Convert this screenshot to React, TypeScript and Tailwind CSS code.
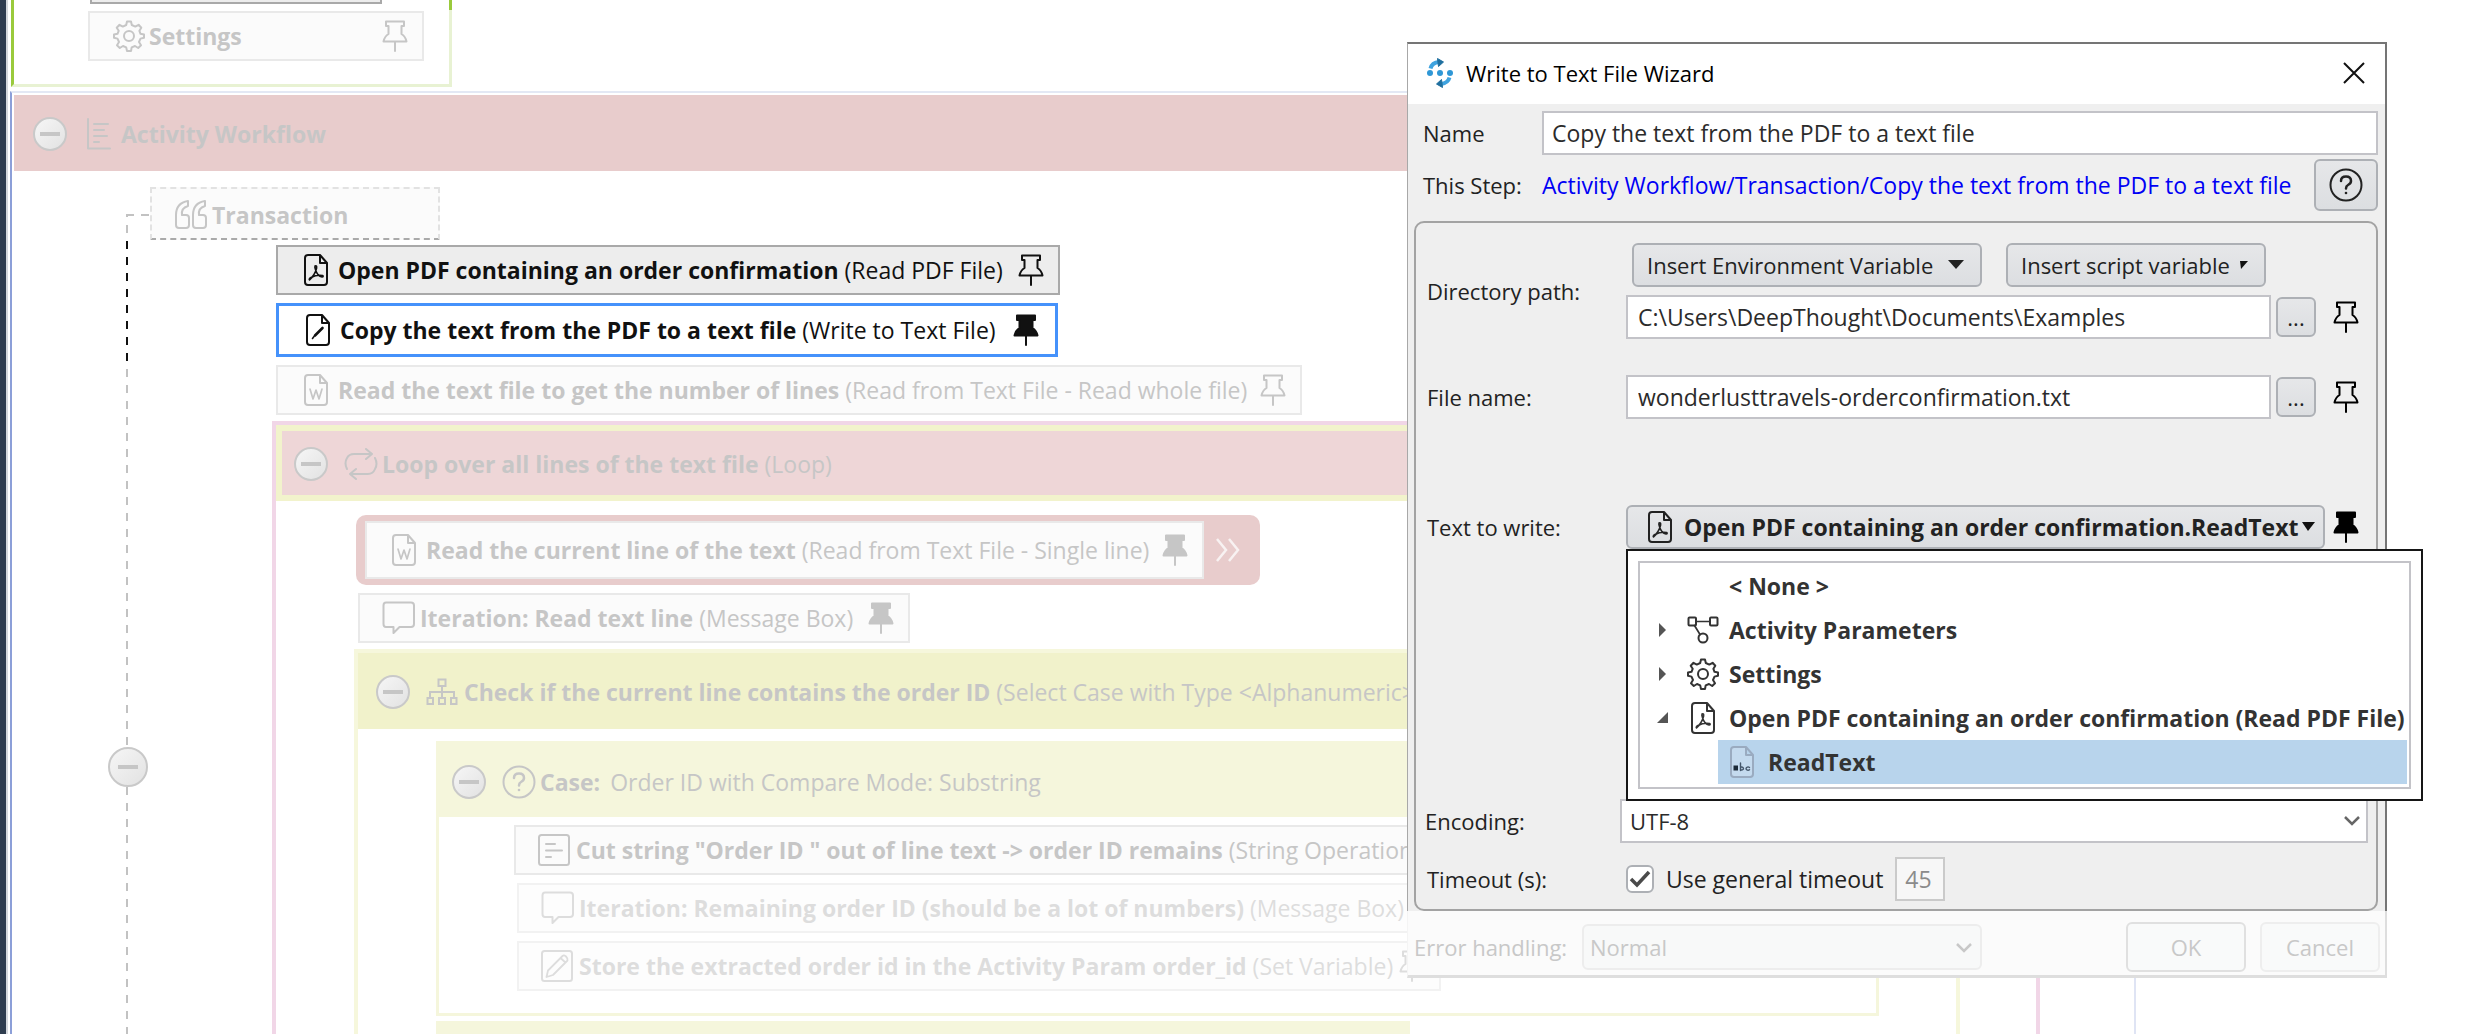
import React, { ReactNode } from "react";

/* ---------- icons ---------- */

type IconProps = { className?: string };

function Svg({ w, h, children, className = "" }: { w: number; h: number; children: ReactNode; className?: string }) {
  return (
    <svg
      width={w}
      height={h}
      viewBox={`0 0 ${w} ${h}`}
      fill="none"
      stroke="currentColor"
      strokeWidth={2}
      strokeLinejoin="round"
      strokeLinecap="round"
      aria-hidden="true"
      className={`shrink-0 ${className}`}
    >
      {children}
    </svg>
  );
}

const PAGE = "M4 1H16L23 9V28Q23 31 20 31H4Q1 31 1 28V4Q1 1 4 1Z M16 1V9H23";

function PdfFile() {
  return (
    <Svg w={24} h={32}>
      <path d={PAGE} />
      <path strokeWidth={1.6} d="M11 12Q13 11 12.6 14Q11.500 20 5.500 26Q4.500 25 7 23.500Q13 20.500 18.500 21.500Q20 22.500 18 23Q13.500 22 11.600 16Q10.500 13 11 12" />
    </Svg>
  );
}

function PenFile() {
  return (
    <Svg w={24} h={32}>
      <path d={PAGE} />
      <path strokeWidth={2.6} d="M9 21.500L16.500 14" />
      <path strokeWidth={1.6} d="M6.500 24.500L8 22.500" />
    </Svg>
  );
}

function WordFile() {
  return (
    <Svg w={24} h={32}>
      <path d={PAGE} />
      <path strokeWidth={1.7} d="M6 15L9 25L12 16L15 25L18 15" />
    </Svg>
  );
}

function TextFile() {
  return (
    <Svg w={24} h={32} className="text-[#9aabc0]">
      <path fill="#c4daee" d={PAGE} />
      <rect x="3.500" y="19.500" width="4.500" height="5" fill="#1c2a38" stroke="none" />
      <path stroke="#44566a" strokeWidth={1.400} d="M10.500 17V24.500M10.500 21.500a1.700 1.500 0 1 1 0 2M19.500 21.500a2 1.600 0 1 0 0 2.200" />
    </Svg>
  );
}

function Pin({ filled = false, className = "" }: { filled?: boolean; className?: string }) {
  return (
    <Svg w={26} h={32} className={className}>
      <path
        fill={filled ? "currentColor" : "none"}
        d="M4 1.500H22V6H19.500V14Q23.500 16.500 24.500 21.500H1.500Q2.500 16.500 6.500 14V6H4Z"
      />
      <path d="M13 22V31" />
    </Svg>
  );
}

function Gear({ className = "" }: IconProps) {
  return (
    <Svg w={32} h={32} className={className}>
      <circle cx="16" cy="16" r="5" />
      <path d="M13.200 5L14 1.500H18L18.800 5L22.300 6.600L25.600 4.800L28.300 7.700L26.400 10.800L27.500 13.800L31 14.500V17.800L27.500 18.600L26 22L28 25.200L25.200 28L22 26L18.700 27.400L18 31H14L13.200 27.400L10 26L6.800 28L4 25.200L6 22L4.500 18.600L1 17.800V14.500L4.500 13.800L5.700 10.800L3.700 7.700L6.500 4.800L9.800 6.600Z" />
    </Svg>
  );
}

function WorkflowLines() {
  return (
    <Svg w={24} h={32}>
      <path d="M1 1V30.500H23M7 6H21M7 12H17M7 18H20M7 24H12" />
    </Svg>
  );
}

function Quotes() {
  return (
    <Svg w={34} h={30}>
      <path d="M14 1Q2 3 2 15V25Q2 28 5 28H12Q15 28 15 25V18Q15 15 12 15H8Q7 8 14 6ZM31 1Q19 3 19 15V25Q19 28 22 28H29Q32 28 32 25V18Q32 15 29 15H25Q24 8 31 6Z" />
    </Svg>
  );
}

function LoopArrows() {
  return (
    <Svg w={34} h={32}>
      <path d="M3 21Q0 15 3 10Q5 6 10 6H28M22 1L28 6L22 11M31 10Q34 16 31 21Q29 26 24 26H6M12 21L6 26L12 31" />
    </Svg>
  );
}

function Speech() {
  return (
    <Svg w={34} h={34}>
      <path d="M4 1.500H29Q32 1.500 32 4.500V23Q32 26 29 26H17.500L11.500 32V26H4Q1.500 26 1.500 23V4.500Q1.500 1.500 4 1.500Z" />
    </Svg>
  );
}

function Sitemap() {
  return (
    <Svg w={32} h={28}>
      <path strokeLinejoin="miter" d="M12.500 1.500H19.500V8H12.500ZM1.500 20H7V26H1.500ZM13 20H19V26H13ZM25 20H30.500V26H25ZM16 8V20M4 20V14H28V20" />
    </Svg>
  );
}

function Question() {
  return (
    <Svg w={34} h={34}>
      <circle cx="17" cy="17" r="15.500" />
      <path strokeWidth={2.500} d="M12 13Q12 8.500 17 8.500T22 13Q22 15.500 19 17Q17 18 17 20.500" />
      <circle cx="17" cy="25" r="1.300" fill="currentColor" stroke="none" />
    </Svg>
  );
}

function ListBox() {
  return (
    <Svg w={32} h={32}>
      <rect x="1" y="1" width="30" height="30" rx="2.500" />
      <path d="M8 10H17M8 16.500H24M8 23H13" />
    </Svg>
  );
}

function EditBox() {
  return (
    <Svg w={32} h={32}>
      <rect x="1" y="1" width="30" height="30" rx="2.500" />
      <path strokeWidth={1.800} d="M5.500 27L7 20.500L21.500 6Q23 4.500 25 6.500T26.500 10.500L12 25ZM19.500 8L24.500 12.500" />
    </Svg>
  );
}

function Nodes() {
  return (
    <Svg w={32} h={28}>
      <rect x="1.500" y="1.500" width="7.500" height="8" rx="1" />
      <rect x="23" y="1.500" width="7.500" height="8" rx="1" />
      <circle cx="16" cy="22" r="4.500" />
      <path strokeWidth={1.700} d="M9 5.500H23M7.500 9.500L13 18.500" />
    </Svg>
  );
}

function Logo() {
  return (
    <svg width="28" height="30" viewBox="0 0 28 30" fill="none" aria-hidden="true" className="shrink-0">
      <path d="M4.500 10.500Q6 4.500 13 4M23.500 19.500Q22 25 15 26" stroke="#3fa3df" strokeWidth="4" />
      <path d="M11.500 .5L17.500 4L12.500 8.500ZM16.500 29.500L10.500 26L15.500 21.500Z" fill="#1f6f9f" stroke="#1f6f9f" />
      <circle cx="4" cy="15" r="3" fill="#2f97d6" />
      <circle cx="14" cy="15" r="3" fill="#2f97d6" />
      <circle cx="24" cy="15" r="3" fill="#2f97d6" />
    </svg>
  );
}

function Triangle({ className = "" }: IconProps) {
  return (
    <svg width="16" height="10" viewBox="0 0 16 10" fill="currentColor" aria-hidden="true" className={`shrink-0 ${className}`}>
      <path d="M0 0H16L8 9Z" />
    </svg>
  );
}

function Chevron({ className = "" }: IconProps) {
  return (
    <svg width="16" height="12" viewBox="0 0 16 12" fill="none" stroke="currentColor" strokeWidth="2.500" aria-hidden="true" className={className}>
      <path d="M1 2L8 9L15 2" />
    </svg>
  );
}

/* ---------- workflow canvas ---------- */

function Collapse({ label, large = false }: { label: string; large?: boolean }) {
  return (
    <button
      type="button"
      aria-label={`Collapse ${label}`}
      className={`flex shrink-0 items-center justify-center rounded-full border-2 border-[#c9c9c9] bg-linear-to-br from-[#f6f6f6] to-[#e2e2e2] ${large ? "size-10" : "size-[34px]"}`}
    >
      <span className="h-1 w-5 bg-[#c6c6c6]" />
    </button>
  );
}

type StepProps = {
  icon: ReactNode;
  title: string;
  kind?: string;
  pin?: "open" | "filled";
  className: string;
};

function Step({ icon, title, kind, pin, className }: StepProps) {
  return (
    <div className={`flex items-center whitespace-nowrap ${className}`}>
      {icon}
      <span>
        <b>{title}</b>
        {kind && <span> ({kind})</span>}
      </span>
      {pin && <Pin filled={pin === "filled"} className="ml-auto" />}
    </div>
  );
}

const FADED = "border-2 border-[#e9e9e9] bg-[#fbfbfb] text-[#c6c6c6]";
const FAINT = "border-2 border-[#f2f2f2] bg-[#fdfdfd] text-[#dddddd]";

function Rail() {
  return (
    <div className="ml-24 flex w-10 shrink-0 flex-col items-center pt-[43px]">
      <div className="ml-[18px] h-[2px] w-6 self-start bg-[repeating-linear-gradient(to_right,#c2c2c2_0_8px,transparent_8px_15px)]" />
      <div className="mr-[2px] h-[25px] w-[2px] bg-[repeating-linear-gradient(to_bottom,#c2c2c2_0_1px,transparent_1px_9px,#c2c2c2_9px_17px,transparent_17px_25px)]" />
      <div className="mr-[2px] h-[120px] w-[2px] bg-[repeating-linear-gradient(to_bottom,#111111_0_8px,transparent_8px_16px)]" />
      <div className="mr-[2px] h-[386px] w-[2px] bg-[repeating-linear-gradient(to_bottom,transparent_0_8px,#c2c2c2_8px_16px)]" />
      <Collapse label="Transaction" large />
      <div className="mr-[2px] w-[2px] flex-1 bg-[repeating-linear-gradient(to_bottom,#c2c2c2_0_8px,transparent_8px_16px)]" />
    </div>
  );
}

function CaseBox() {
  return (
    <section className="mt-3 mr-[77px] ml-[78px] border-x-[3px] border-b-[3px] border-[#f5f6dc] pb-[22px]">
      <header className="flex h-[76px] items-center bg-[#f5f6dc] pt-[6px] pl-[13px] whitespace-nowrap text-[#c6c6c6]">
        <Collapse label="Case" />
        <span className="ml-4 flex items-center gap-1">
          <Question />
          <span>
            <b className="mr-[10px]">Case:</b>Order ID with Compare Mode: Substring
          </span>
        </span>
      </header>
      <div className="flex flex-col gap-2 pt-2">
        <Step
          icon={<ListBox />}
          title={'Cut string "Order ID " out of line text -> order ID remains'}
          kind="String Operation"
          pin="open"
          className={`ml-[75px] h-[50px] w-[980px] gap-[6px] pr-4 pl-[22px] ${FADED}`}
        />
        <Step
          icon={<Speech />}
          title="Iteration: Remaining order ID (should be a lot of numbers)"
          kind="Message Box"
          pin="open"
          className={`ml-[78px] h-[50px] w-[940px] gap-1 pr-4 pl-[22px] ${FAINT}`}
        />
        <Step
          icon={<EditBox />}
          title="Store the extracted order id in the Activity Param order_id"
          kind="Set Variable"
          pin="open"
          className={`ml-[78px] h-[50px] w-[924px] gap-[6px] pr-4 pl-[22px] ${FAINT}`}
        />
      </div>
    </section>
  );
}

function SelectCase() {
  return (
    <section className="mt-[6px] mr-[76px] ml-[78px] flex-1 border-x-4 border-t-4 border-[#f6f7dc]">
      <header className="flex h-[76px] items-center bg-[#f1f2cb] pt-[2px] pl-[18px] whitespace-nowrap text-[#c6c6c6]">
        <Collapse label="Check" />
        <span className="ml-4 flex items-center gap-[6px]">
          <Sitemap />
          <span>
            <b>Check if the current line contains the order ID</b> (Select Case with Type &lt;Alphanumeric&gt;)
          </span>
        </span>
      </header>
      <CaseBox />
      <div className="mt-[5px] ml-[78px] h-[76px] w-[974px] bg-[#f5f6dc]" />
    </section>
  );
}

function LoopBox() {
  return (
    <section className="mt-[6px] mr-[94px] ml-[-4px] flex flex-col border-x-4 border-t-4 border-[#f1d6e7]">
      <header className="flex h-[76px] items-center border-[6px] border-[#f2f3cc] bg-[#eed6d7] pt-[2px] pl-3 whitespace-nowrap text-[#c6c6c6]">
        <Collapse label="Loop" />
        <span className="ml-4 flex items-center gap-1">
          <LoopArrows />
          <span>
            <b>Loop over all lines of the text file</b> (Loop)
          </span>
        </span>
      </header>
      <div className="mt-[14px] ml-20 flex h-[70px] w-[904px] items-center rounded-[10px] bg-[#e8cccc] pl-[9px]">
        <Step
          icon={<WordFile />}
          title="Read the current line of the text"
          kind="Read from Text File - Single line"
          pin="filled"
          className="h-[58px] w-[839px] gap-[10px] border-2 border-[#e9e9e9] bg-[#fbfbfb] pr-[14px] pl-[25px] text-[#c6c6c6]"
        />
        <svg width="26" height="24" viewBox="0 0 26 24" fill="none" stroke="#f8f2f2" strokeWidth="2.500" className="ml-[11px]" aria-hidden="true">
          <path d="M2 1L11 12L2 23M14 1L23 12L14 23" />
        </svg>
      </div>
      <Step
        icon={<Speech />}
        title="Iteration: Read text line"
        kind="Message Box"
        pin="filled"
        className={`mt-2 ml-[82px] h-[50px] w-[552px] gap-1 pr-[14px] pl-[22px] ${FADED}`}
      />
      <SelectCase />
    </section>
  );
}

function Workflow() {
  return (
    <section className="mt-1 mr-[332px] ml-[2px] border-2 border-b-0 border-t-[#e3e8f4] border-r-[#dfe4f4] border-l-[#8c9fd8]">
      <header className="mt-[2px] ml-[2px] flex h-[76px] items-center bg-[#e8cccc] pt-[2px] pl-[19px] text-[#c6c6c6]">
        <Collapse label="Activity Workflow" />
        <span className="ml-5 flex items-center gap-[10px]">
          <WorkflowLines />
          <b>Activity Workflow</b>
        </span>
      </header>
      <div className="flex">
        <Rail />
        <div className="min-w-0 flex-1 pt-4">
          <div className="flex">
            <Step
              icon={<Quotes />}
              title="Transaction"
              className="ml-[2px] h-[53px] w-[290px] gap-1 border-2 border-dashed border-[#e2e2e2] border-b-[#aaaaaa] bg-[#fbfbfb] pt-[3px] pl-[22px] text-[#c6c6c6]"
            />
          </div>
          <div className="ml-32 pt-[5px]">
            <Step
              icon={<PdfFile />}
              title="Open PDF containing an order confirmation"
              kind="Read PDF File"
              pin="open"
              className="h-[50px] w-[784px] gap-[10px] border-2 border-[#a9a9a9] bg-[#ededed] pr-[14px] pl-[26px] text-[#111111]"
            />
            <Step
              icon={<PenFile />}
              title="Copy the text from the PDF to a text file"
              kind="Write to Text File"
              pin="filled"
              className="mt-2 h-[54px] w-[782px] gap-[10px] border-[3px] border-[#4592fb] bg-white pr-4 pl-[27px] text-[#111111]"
            />
            <Step
              icon={<WordFile />}
              title="Read the text file to get the number of lines"
              kind="Read from Text File - Read whole file"
              pin="open"
              className={`mt-2 h-[50px] w-[1026px] gap-[10px] pr-[14px] pl-[26px] ${FADED}`}
            />
            <LoopBox />
          </div>
        </div>
      </div>
    </section>
  );
}

function Canvas() {
  return (
    <main className="min-w-0 flex-1 text-[23px]">
      <div className="ml-[3px] h-[10px] w-[441px] border-x-[3px] border-[#9aca3c] pl-[76px]">
        <div className="h-1 w-[292px] border-2 border-t-0 border-[#a9a9a9] bg-[#ededed]" />
      </div>
      <div className="ml-[3px] h-[77px] w-[441px] border-x-[3px] border-b-[3px] border-r-[#e8f2d3] border-b-[#e8f2d3] border-l-[#9aca3c] pt-px pl-[74px]">
        <Step icon={<Gear />} title="Settings" pin="open" className={`h-[50px] w-[336px] gap-1 pr-[14px] pl-[23px] ${FADED}`} />
      </div>
      <Workflow />
    </main>
  );
}

/* ---------- wizard dialog ---------- */

const BUTTON = "flex items-center rounded-md border-2 border-[#adb0b5] bg-linear-to-b from-[#e6e7e9] to-[#dcdee1]";
const FIELD = "h-11 min-w-0 border-2 border-[#c3c3c8] bg-white text-[#2b2b2b] outline-none";

function PathField({ id, value }: { id: string; value: string }) {
  return (
    <div className="flex items-center">
      <input id={id} defaultValue={value} className={`${FIELD} flex-1 px-[10px] text-[23px]`} />
      <button type="button" aria-label="Browse" className={`${BUTTON} ml-[5px] h-10 w-10 justify-center`}>
        ...
      </button>
      <button type="button" aria-label="Pin" className="ml-[17px] text-black">
        <Pin />
      </button>
    </div>
  );
}

function TreeRow({ arrow, icon, label }: { arrow?: "right" | "down"; icon?: ReactNode; label: string }) {
  return (
    <li>
      <button type="button" className="flex h-11 w-full items-center pl-[15px] font-bold">
        <svg width="12" height="14" viewBox="0 0 12 14" fill="#555555" aria-hidden="true" className="shrink-0">
          {arrow === "right" && <path d="M2 0L9 7L2 14Z" />}
          {arrow === "down" && <path d="M11 1V12H0Z" />}
        </svg>
        <span className="ml-[18px] flex w-8 shrink-0 justify-center">{icon}</span>
        <span className="ml-[10px] whitespace-nowrap">{label}</span>
      </button>
    </li>
  );
}

function VariableTree() {
  return (
    <div className="absolute top-full left-0 z-20 w-[797px] border-2 border-[#161616] bg-white p-[10px] text-[#333333]">
      <ul className="border-2 border-[#c3c3c8] px-[2px] pt-px pb-[3px]">
        <TreeRow label="< None >" />
        <TreeRow arrow="right" icon={<Nodes />} label="Activity Parameters" />
        <TreeRow arrow="right" icon={<Gear />} label="Settings" />
        <TreeRow arrow="down" icon={<PdfFile />} label="Open PDF containing an order confirmation (Read PDF File)" />
        <li>
          <button type="button" className="ml-auto flex h-11 w-[689px] items-center gap-[14px] bg-[#b8d4ec] pl-3 font-bold">
            <TextFile />
            ReadText
          </button>
        </li>
      </ul>
    </div>
  );
}

const ROW = "grid grid-cols-[199px_1fr] items-center pr-[17px] pl-[11px]";

function Wizard() {
  return (
    <div role="dialog" aria-label="Write to Text File Wizard" className="absolute top-[42px] right-[81px] z-10 w-[980px] text-[#222222]">
      <div className="border-t-2 border-r-2 border-l border-[#757575] border-l-[#a8a8a8] bg-[#efefef]">
        <div className="flex h-[60px] items-center bg-white pr-5 pb-[3px] pl-[18px] text-black">
          <Logo />
          <h1 className="ml-3">Write to Text File Wizard</h1>
          <button type="button" aria-label="Close" className="ml-auto">
            <svg width="22" height="22" viewBox="0 0 22 22" stroke="#111111" strokeWidth="2" aria-hidden="true">
              <path d="M1 1L21 21M21 1L1 21" />
            </svg>
          </button>
        </div>
        <div className="grid grid-cols-[119px_1fr] items-center gap-y-1 pt-[7px] pr-[7px] pl-[15px]">
          <label htmlFor="step-name">Name</label>
          <input id="step-name" defaultValue="Copy the text from the PDF to a text file" className={`${FIELD} px-2 text-[23px]`} />
          <span>This Step:</span>
          <div className="flex items-center justify-between">
            <a href="#step" className="text-[23px] whitespace-nowrap text-[#0000f5]">
              Activity Workflow/Transaction/Copy the text from the PDF to a text file
            </a>
            <button type="button" aria-label="Help" className={`${BUTTON} h-[52px] w-16 shrink-0 justify-center`}>
              <Question />
            </button>
          </div>
        </div>
        <div className="mt-[10px] mr-[7px] ml-[6px] rounded-[10px] border-2 border-[#a3a3a3] pt-5 pb-2">
          <div className={ROW}>
            <label htmlFor="directory">Directory path:</label>
            <div>
              <div className="mb-2 ml-[6px] flex gap-6 whitespace-nowrap">
                <button type="button" className={`${BUTTON} h-11 w-[350px] justify-between pr-4 pl-[13px]`}>
                  Insert Environment Variable
                  <Triangle />
                </button>
                <button type="button" className={`${BUTTON} h-11 w-[260px] justify-between pr-4 pl-[13px]`}>
                  Insert script variable
                  <svg width="8" height="8" viewBox="0 0 8 8" aria-hidden="true">
                    <path d="M0 0H8L1 8Z" fill="#111111" />
                  </svg>
                </button>
              </div>
              <PathField id="directory" value="C:\Users\DeepThought\Documents\Examples" />
            </div>
          </div>
          <div className={`${ROW} mt-9`}>
            <label htmlFor="file">File name:</label>
            <PathField id="file" value="wonderlusttravels-orderconfirmation.txt" />
          </div>
          <div className={`${ROW} mt-[86px]`}>
            <span>Text to write:</span>
            <div className="relative flex items-center text-[23px]">
              <button type="button" aria-expanded="true" className={`${BUTTON} h-11 flex-1 pl-5 font-bold whitespace-nowrap`}>
                <PdfFile />
                <span className="ml-[12px]">Open PDF containing an order confirmation.ReadText</span>
                <svg width="14" height="10" viewBox="0 0 14 10" aria-hidden="true" className="ml-1 shrink-0">
                  <path d="M0 0H13L6 9Z" fill="#111111" />
                </svg>
              </button>
              <button type="button" aria-label="Unpin" className="ml-[8px] text-black">
                <Pin filled />
              </button>
              <VariableTree />
            </div>
          </div>
          <div className="mt-[250px] grid grid-cols-[195px_1fr] items-center pr-2 pl-[9px]">
            <label htmlFor="encoding">Encoding:</label>
            <div className="relative flex">
              <select id="encoding" className={`${FIELD} w-full appearance-none px-2`}>
                <option>UTF-8</option>
              </select>
              <Chevron className="pointer-events-none absolute top-4 right-2 text-[#666666]" />
            </div>
          </div>
          <div className={`${ROW} mt-[14px]`}>
            <span>Timeout (s):</span>
            <div className="flex h-11 items-center text-[23px]">
              <label className="flex items-center gap-3 whitespace-nowrap">
                <span className="relative flex">
                  <input type="checkbox" defaultChecked className="size-7 appearance-none rounded-md border-2 border-[#adb0b5] bg-white" />
                  <svg width="28" height="28" viewBox="0 0 28 28" fill="none" stroke="#4a4a4a" strokeWidth="3.500" aria-hidden="true" className="pointer-events-none absolute inset-0">
                    <path d="M5 14L11 20L23 7" />
                  </svg>
                </span>
                Use general timeout
              </label>
              <input aria-label="Timeout seconds" disabled defaultValue="45" className="ml-3 h-11 w-[50px] border-2 border-[#cacaca] bg-[#f7f7f7] px-2 text-[#8b8b8b]" />
            </div>
          </div>
        </div>
      </div>
      <div className="flex h-[67px] items-center border-r-2 border-b-[3px] border-l border-[#dedede] border-l-[#f4f4f4] bg-[#fbfbfb] pt-2 pr-[5px] pl-[6px] text-[#c8c8c8]">
        <label htmlFor="errors" className="w-[168px] whitespace-nowrap">
          Error handling:
        </label>
        <div className="relative flex w-[400px]">
          <select id="errors" className="h-[46px] w-full appearance-none rounded-md border-2 border-[#ededed] bg-[#f8f9f9] px-[6px] outline-none">
            <option>Normal</option>
          </select>
          <Chevron className="pointer-events-none absolute top-[18px] right-[10px]" />
        </div>
        <button type="button" className="ml-auto h-[50px] w-[120px] rounded-md border-2 border-[#e0e0e0] bg-[#f9fafa]">
          OK
        </button>
        <button type="button" className="ml-[14px] h-[50px] w-[120px] rounded-md border-2 border-[#eeeeee] bg-[#f9fafa]">
          Cancel
        </button>
      </div>
    </div>
  );
}

export default function App() {
  return (
    <div className="relative flex h-screen overflow-hidden bg-white font-['Open_Sans','Noto_Sans',sans-serif] text-[22px] leading-7">
      <div className="w-2 shrink-0 border-r-2 border-[#d5d8dc] bg-[#2f3d4f]" />
      <Canvas />
      <Wizard />
    </div>
  );
}
